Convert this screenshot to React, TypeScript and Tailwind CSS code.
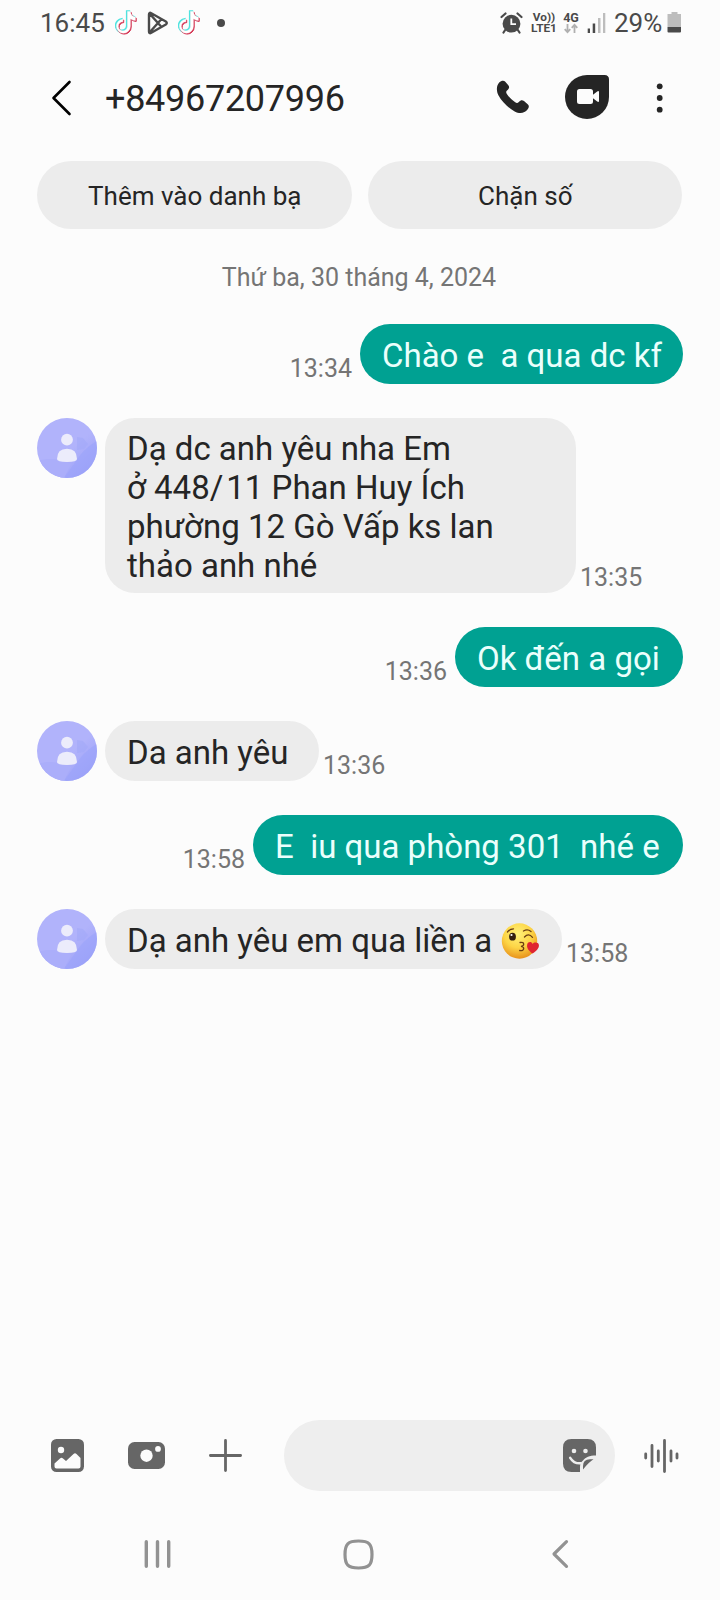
import { useState } from 'react';
import type { ReactNode } from 'react';
import clsx from 'clsx';

type Message = {
  id: number;
  mine: boolean;
  lines: string[];
  time: string;
  size: string;
  kiss?: boolean;
};

const messages: Message[] = [
  { id: 1, mine: true, lines: ['Chào e  a qua dc kf'], time: '13:34', size: 'w-[323px] h-[60px] pt-[12px]' },
  {
    id: 2,
    mine: false,
    lines: ['Dạ dc anh yêu nha Em', 'ở 448/11 Phan Huy Ích', 'phường 12 Gò Vấp ks lan', 'thảo anh nhé'],
    time: '13:35',
    size: 'w-[471px] h-[175px] pt-[11px]',
  },
  { id: 3, mine: true, lines: ['Ok đến a gọi'], time: '13:36', size: 'w-[228px] h-[60px] pt-[12px]' },
  { id: 4, mine: false, lines: ['Da anh yêu'], time: '13:36', size: 'w-[214px] h-[60px] pt-[12px]' },
  { id: 5, mine: true, lines: ['E  iu qua phòng 301  nhé e'], time: '13:58', size: 'w-[430px] h-[60px] pt-[12px]' },
  { id: 6, mine: false, lines: ['Dạ anh yêu em qua liền a '], time: '13:58', size: 'w-[457px] h-[60px] pt-[12px]', kiss: true },
];

export default function App() {
  return (
    <div className="flex h-[1600px] w-[720px] flex-col overflow-hidden bg-[#fcfcfc] font-['Roboto',sans-serif] text-[#252525]">
      <StatusBar />
      <Header />

      <div className="mt-[21px] flex gap-4 pl-[37px] pr-[38px]">
        <PillButton>Thêm vào danh bạ</PillButton>
        <PillButton>Chặn số</PillButton>
      </div>

      <p className="mt-[34px] pr-[2px] text-center text-[25px] leading-[30px] text-[#757575]">Thứ ba, 30 tháng 4, 2024</p>

      <main className="mt-[31px] flex flex-1 flex-col gap-[34px] pl-[37px] pr-[37px]">
        {messages.map((m) => (
          <MessageRow key={m.id} message={m} />
        ))}
      </main>

      <Composer />
      <NavBar />
    </div>
  );
}

function StatusBar() {
  return (
    <div className="flex h-[45px] shrink-0 items-center pl-10 pr-[38px] text-[26px] leading-[45px] text-[#4a4a4a]">
      <span className="w-[66px] pt-px">16:45</span>
      <TikTokIcon className="ml-[9px]" />
      <PlayIcon className="ml-[10px]" />
      <TikTokIcon className="ml-[9px]" />
      <span className="ml-[17px] size-2 rounded-full bg-[#4a4a4a]" />

      <div className="ml-auto flex items-center">
        <AlarmIcon />
        <div className="ml-[7px] flex w-[28px] flex-col items-center text-[11.8px] leading-[11px] font-bold">
          <span>Vo))</span>
          <span>LTE1</span>
        </div>
        <div className="ml-[4px] flex w-[18px] flex-col items-center text-[12.5px] leading-[11px] font-bold">
          <span>4G</span>
          <svg width="14" height="11" viewBox="0 0 14 11" fill="none" stroke="#b0b0b0" strokeWidth="1.8">
            <path d="M3.5 1v8M.7 6.2l2.8 3 2.8-3M10.5 10V2M7.7 4.8l2.8-3 2.8 3" />
          </svg>
        </div>
        <svg className="ml-[7px]" width="19" height="20" viewBox="0 0 19 20">
          <path d="M.7 15.500h2.300V20H.7zM5.700 10.500H8.200V20H5.700z" fill="#4a4a4a" />
          <path d="M11 5h2.500v15H11zM16 0h2.300v20H16z" fill="#bdbdbd" />
        </svg>
        <span className="ml-[8px] w-[49px] pt-px">29%</span>
        <svg className="ml-[4px]" width="15" height="21" viewBox="0 0 15 21">
          <path d="M4.5 0h6v2H14v13H.5V2h4z" fill="#bdbdbd" />
          <path d="M.5 15H14v4.5a1 1 0 0 1-1 1H1.500a1 1 0 0 1-1-1z" fill="#4a4a4a" />
        </svg>
      </div>
    </div>
  );
}

function Header() {
  return (
    <header className="flex h-[95px] shrink-0 items-center pl-[51px] pr-[56px]">
      <button aria-label="Back" className="mt-[10px]">
        <svg width="22" height="38" viewBox="0 0 22 38" fill="none" stroke="#000" strokeWidth="2.600" strokeLinecap="round" strokeLinejoin="round">
          <path d="M18.500 3L2.500 19L18.500 35" />
        </svg>
      </button>
      <h1 className="ml-[32px] mt-[12px] text-[36px] leading-[44px] tracking-[-0.28px]">+84967207996</h1>
      <button aria-label="Call" className="ml-auto mt-[9px]">
        <svg width="34" height="34" viewBox="0 0 34 34" fill="#252525">
          <path d="M3.200 2.500C5.200.4 8 .2 9.300 1.700l3 3.500c1.500 1.900.9 3.200-1.300 5.300-1.200 1.200-1 2.300.2 4 1.900 2.800 4.700 5.600 7.700 7.600 1.600 1.100 2.700 1.200 3.900-.1 1.900-2 3.400-2.400 5.200-.9l3.700 3.200c1.600 1.400 1.500 3-.2 5.300C28.800 33.300 23.700 34.300 18.700 31.500 12 27.800 6 21.700 2.400 15.200.3 11.300.2 5.700 3.200 2.500z" />
        </svg>
      </button>
      <button aria-label="Video call" className="ml-[35px] mt-[8px]">
        <svg width="44" height="44" viewBox="0 0 44 44">
          <path d="M22 0H39.500Q44 0 44 4.500V22A22 22 0 1 1 22 0z" fill="#252525" />
          <path d="M14.500 14h11q2.500 0 2.500 2.500v3.200l4.200-3.200q1.800-1.200 1.800.8v8.400q0 2-1.800.8L28 23.300v3.200q0 2.500-2.500 2.500h-11q-2.500 0-2.500-2.500v-10q0-2.500 2.500-2.500z" fill="#fcfcfc" />
        </svg>
      </button>
      <button aria-label="More options" className="ml-[47px] mt-[10px]">
        <svg width="8" height="30" viewBox="0 0 8 30" fill="#252525">
          <circle cx="3.700" cy="3.300" r="2.900" />
          <circle cx="3.700" cy="15" r="2.900" />
          <circle cx="3.700" cy="26.700" r="2.900" />
        </svg>
      </button>
    </header>
  );
}

function PillButton({ children }: { children: ReactNode }) {
  return (
    <button className="h-[68px] flex-1 rounded-full bg-[#ececec] pt-[2px] pl-px text-[26px] leading-[32px]">{children}</button>
  );
}

function MessageRow({ message }: { message: Message }) {
  const { mine, lines, time, size, kiss } = message;

  return (
    <div className={clsx('flex items-end', mine && 'flex-row-reverse')}>
      {!mine && <Avatar />}
      <div
        className={clsx(
          'shrink-0 rounded-[30px] pl-[22px] text-[33px] leading-[39px] whitespace-pre',
          size,
          mine ? 'bg-[#00a192] text-[#eafffc]' : 'ml-2 bg-[#ececec]',
        )}
      >
        {lines.map((line) => (
          <p key={line} className="flex items-center">
            <span>
              {/* a little air after the slash in house numbers */}
              {line.split(/(\/)/).map((part, i) =>
                part === '/' ? <span key={i} className="tracking-[3px]">/</span> : part,
              )}
            </span>
            {kiss && <KissEmoji />}
          </p>
        ))}
      </div>
      <time className={clsx('text-[25px] leading-[30px] text-[#757575]', mine ? 'mr-2' : 'ml-[4px]')}>{time}</time>
    </div>
  );
}

function Avatar() {
  return (
    <svg className="shrink-0 self-start" width="60" height="60" viewBox="0 0 60 60">
      <defs>
        <linearGradient id="avatarBg" x1="0.2" y1="0.1" x2="0.9" y2="0.95">
          <stop offset="0.5" stopColor="#b1b3fb" />
          <stop offset="1" stopColor="#9a9ff7" />
        </linearGradient>
        <clipPath id="avatarClip">
          <circle cx="30" cy="30" r="30" />
        </clipPath>
      </defs>
      <g clipPath="url(#avatarClip)">
        <rect width="60" height="60" fill="url(#avatarBg)" />
        <path d="M0 43C14 39 27 42 34 46L27 60H0z" fill="#abaefa" />
        <path d="M27 60L44 36Q52 27 60 23V60z" fill="#9ba4fa" opacity="0.6" />
        <path d="M40 19l6 1 5 6-4 5-7 1z" fill="#a2a8f9" opacity="0.6" />
      </g>
      <circle cx="30" cy="21.700" r="5.900" fill="#ececfb" />
      <path d="M20 41q0-10.200 10-10.200T40 41q0 3-10 3t-10-3z" fill="#ececfb" />
    </svg>
  );
}

function KissEmoji() {
  return (
    <svg role="img" aria-label="😘" width="39" height="38" viewBox="0 0 39 38" className="ml-px shrink-0">
      <defs>
        <radialGradient id="kissFace" cx="0.45" cy="0.3" r="0.7">
          <stop offset="0" stopColor="#fff17a" />
          <stop offset="0.55" stopColor="#fdd546" />
          <stop offset="1" stopColor="#e8921c" />
        </radialGradient>
      </defs>
      <circle cx="18.500" cy="19" r="17.700" fill="url(#kissFace)" />
      <ellipse cx="11.500" cy="14.700" rx="3.400" ry="3.900" fill="#35200f" />
      <circle cx="10.500" cy="13" r="1.100" fill="#fff" />
      <g fill="none" stroke="#6b3d12" strokeWidth="1.300" strokeLinecap="round">
        <path d="M6.500 10q2.300-3.200 6-3.200M22.500 9q4-2.500 7.500.5M23.500 15q4-4.500 8 .3" />
        <path d="M19 20.500q3.700-.5 3.700 1.700 0 1.700-2.700 2.100 2.900.4 2.700 2.400-.3 2.300-4 1.800" />
      </g>
      <path d="M31.500 31.500C27.500 28.500 25.500 26 26.200 22.500c.7-2.900 4.300-3.200 5.400-.6 1.800-2.300 5.900-1.600 6.300 1 .4 3.300-2.900 6.300-6.400 8.600z" fill="#df2430" />
    </svg>
  );
}

function Composer() {
  const [text, setText] = useState('');

  return (
    <footer className="flex h-[71px] shrink-0 items-center pl-[51px] pr-[40px] text-[#666]">
      <svg width="33" height="33" viewBox="0 0 33 33">
        <rect width="33" height="33" rx="5.500" fill="currentColor" />
        <circle cx="10" cy="11" r="3.200" fill="#fcfcfc" />
        <path d="M3.500 24.500L9 19.500Q10.500 18 12 19.500L15 22L22.500 15Q24 13.500 25.500 15L29.500 19V27.500Q29.500 29.500 27.500 29.500H5.500Q3.500 29.500 3.500 27.500z" fill="#fcfcfc" />
      </svg>
      <svg className="ml-[44px]" width="37" height="28" viewBox="0 0 37 28">
        <rect width="37" height="27" rx="6.500" fill="currentColor" />
        <circle cx="18.500" cy="13.700" r="6.200" fill="#fcfcfc" />
        <circle cx="30" cy="6.900" r="2.900" fill="#fcfcfc" />
      </svg>
      <svg className="ml-[44px]" width="33" height="33" viewBox="0 0 33 33" stroke="currentColor" strokeWidth="2.800" strokeLinecap="round">
        <path d="M16.500 1.400v30.200M1.400 16.500h30.200" />
      </svg>
      <div className="ml-[42px] flex h-[71px] w-[331px] items-center rounded-full bg-[#eeeeee] pl-7 pr-[19px]">
        <input
          value={text}
          onChange={(e) => setText(e.target.value)}
          className="min-w-0 flex-1 bg-transparent text-[28px] text-[#252525] outline-none"
        />
        <svg className="shrink-0" width="33" height="33" viewBox="0 0 33 33">
          <path d="M8.500 0H24.500Q33 0 33 8.500V16.500C26 16.500 23 18 20 21.500Q17 24 17 28V33H8.500Q0 33 0 24.500V8.500Q0 0 8.500 0z" fill="currentColor" />
          <path d="M20 30.500V27Q20 20.500 27 20.300H30.500Q26 23 20 30.500z" fill="currentColor" />
          <circle cx="11" cy="12" r="2.300" fill="#eee" />
          <circle cx="22.500" cy="12" r="2.300" fill="#eee" />
          <path d="M7.200 18.800Q11 25 18 24.300" fill="none" stroke="#eee" strokeWidth="2.500" strokeLinecap="round" />
        </svg>
      </div>
      <svg className="ml-auto" width="36" height="34" viewBox="0 0 36 34" fill="none" stroke="currentColor" strokeWidth="2.800" strokeLinecap="round">
        <path d="M1.700 15v4M8 6.400v21.200M14.300 11.900v10.200M20.500 1.400v31.200M27 11.900v10.200M33 15v4" />
      </svg>
    </footer>
  );
}

function NavBar() {
  return (
    <nav className="flex h-[109px] shrink-0 items-center pt-[17px] pl-[144px] pr-[151px] text-[#929292]">
      <svg width="28" height="30" viewBox="0 0 28 30" stroke="currentColor" strokeWidth="3.400" strokeLinecap="round">
        <path d="M2.300 2.700v24.600M13.500 2.700v24.600M24.700 2.700v24.600" />
      </svg>
      <svg className="ml-[171px]" width="31" height="31" viewBox="0 0 31 31" fill="none" stroke="currentColor" strokeWidth="3.200">
        <path d="M15.500 2C26 2 29 5 29 15.500S26 29 15.500 29 2 26 2 15.500 5 2 15.500 2z" />
      </svg>
      <svg className="ml-auto" width="18" height="30" viewBox="0 0 18 30" fill="none" stroke="currentColor" strokeWidth="3.200" strokeLinecap="round" strokeLinejoin="round">
        <path d="M15.500 2.700L3 15L15.500 27.300" />
      </svg>
    </nav>
  );
}

function TikTokIcon({ className }: { className?: string }) {
  const note = 'M12.500 1.500v14.800a4.600 4.600 0 1 1-4.600-4.600V9.200a7 7 0 1 0 7.500 7.100V8.700q2.500 1.800 5 1.800V7.200Q16 6.500 15.400 1.500z';

  return (
    <svg className={clsx('shrink-0', className)} width="22" height="26" viewBox="0 0 22 26">
      <path d={note} transform="translate(-.9 -.6)" fill="#4fe3df" stroke="#4fe3df" strokeWidth="1.400" />
      <path d={note} transform="translate(.8 .9)" fill="#d3304f" stroke="#d3304f" strokeWidth="1" />
      <path d={note} fill="#fff" stroke="#fff" strokeWidth="0.400" />
    </svg>
  );
}

function PlayIcon({ className }: { className?: string }) {
  return (
    <svg className={clsx('shrink-0', className)} width="22" height="24" viewBox="0 0 22 24" fill="none" stroke="#4a4a4a" strokeWidth="2.400" strokeLinejoin="round">
      <path d="M2 3.500Q2 1 4.300 2.200L18.800 10.500Q20.800 12 18.800 13.500L4.300 21.800Q2 23 2 20.500zM2.500 2.500L14.500 16M2.500 21.500L14.500 8" />
    </svg>
  );
}

function AlarmIcon() {
  return (
    <svg width="23" height="22" viewBox="0 0 23 22">
      <circle cx="11.500" cy="11.700" r="8.900" fill="#4a4a4a" />
      <path d="M1.500 5L5.500 1.500M21.500 5L17.500 1.500M5.500 17.500L3.500 20.500M17.500 17.500L19.500 20.500" stroke="#4a4a4a" strokeWidth="2.200" strokeLinecap="round" />
      <path d="M11.300 6.500v5.700h4.700" fill="none" stroke="#fcfcfc" strokeWidth="1.800" />
    </svg>
  );
}
